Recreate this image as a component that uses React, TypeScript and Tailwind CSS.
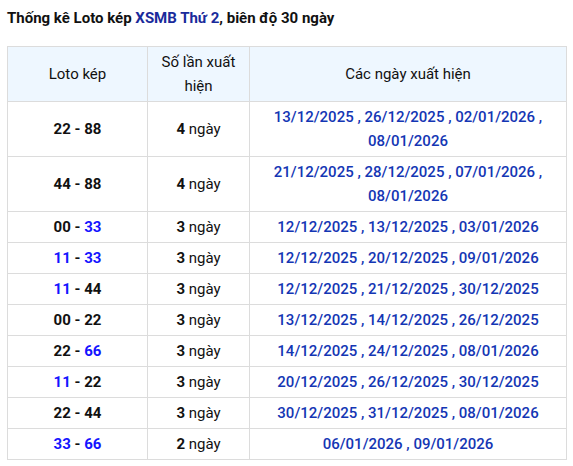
const rows: { a: string; aBlue: boolean; b: string; bBlue: boolean; n: number; dates: string[] }[] = [
  { a: "22", aBlue: false, b: "88", bBlue: false, n: 4, dates: ["13/12/2025", "26/12/2025", "02/01/2026", "08/01/2026"] },
  { a: "44", aBlue: false, b: "88", bBlue: false, n: 4, dates: ["21/12/2025", "28/12/2025", "07/01/2026", "08/01/2026"] },
  { a: "00", aBlue: false, b: "33", bBlue: true, n: 3, dates: ["12/12/2025", "13/12/2025", "03/01/2026"] },
  { a: "11", aBlue: true, b: "33", bBlue: true, n: 3, dates: ["12/12/2025", "20/12/2025", "09/01/2026"] },
  { a: "11", aBlue: true, b: "44", bBlue: false, n: 3, dates: ["12/12/2025", "21/12/2025", "30/12/2025"] },
  { a: "00", aBlue: false, b: "22", bBlue: false, n: 3, dates: ["13/12/2025", "14/12/2025", "26/12/2025"] },
  { a: "22", aBlue: false, b: "66", bBlue: true, n: 3, dates: ["14/12/2025", "24/12/2025", "08/01/2026"] },
  { a: "11", aBlue: true, b: "22", bBlue: false, n: 3, dates: ["20/12/2025", "26/12/2025", "30/12/2025"] },
  { a: "22", aBlue: false, b: "44", bBlue: false, n: 3, dates: ["30/12/2025", "31/12/2025", "08/01/2026"] },
  { a: "33", aBlue: true, b: "66", bBlue: true, n: 2, dates: ["06/01/2026", "09/01/2026"] },
];

function Num({ v, blue }: { v: string; blue: boolean }) {
  return <span className={blue ? "text-[#1414ff]" : "text-[#111]"}>{v}</span>;
}

export default function App() {
  return (
    <div className="min-h-[466px] bg-white px-[7px] font-['Roboto',sans-serif] text-[15px] leading-6 text-[#111]">
      <h1 className="pt-[6px] text-[15px] font-bold leading-6">
        Thống kê Loto kép <span className="text-[#1a2b9b]">XSMB Thứ 2</span>, biên độ 30 ngày
      </h1>
      <table className="mt-[16px] w-[560px] table-fixed border-collapse">
        <colgroup>
          <col className="w-[140px]" />
          <col className="w-[102px]" />
          <col />
        </colgroup>
        <thead>
          <tr className="bg-[#eef7ff]">
            <th className="border border-[#dcdcdc] px-2 py-[3px] font-normal">Loto kép</th>
            <th className="border border-[#dcdcdc] px-2 py-[3px] font-normal">Số lần xuất hiện</th>
            <th className="border border-[#dcdcdc] px-2 py-[3px] font-normal">Các ngày xuất hiện</th>
          </tr>
        </thead>
        <tbody>
          {rows.map((r, i) => (
            <tr key={i}>
              <td className="border border-[#dcdcdc] px-2 py-[3px] text-center font-bold">
                <Num v={r.a} blue={r.aBlue} /> - <Num v={r.b} blue={r.bBlue} />
              </td>
              <td className="border border-[#dcdcdc] px-2 py-[3px] text-center">
                <span className="font-bold">{r.n}</span> ngày
              </td>
              <td className="border border-[#dcdcdc] px-2 py-[3px] text-center font-medium text-[#1436b4]">
                {r.dates.join(" , ")}
              </td>
            </tr>
          ))}
        </tbody>
      </table>
    </div>
  );
}
